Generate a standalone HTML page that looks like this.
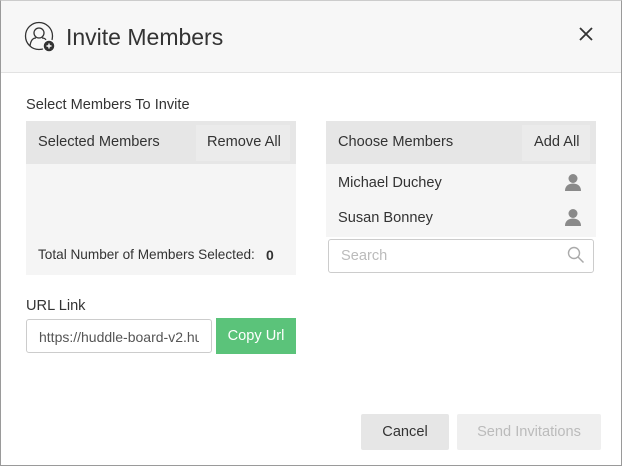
<!DOCTYPE html>
<html><head><style>
*{box-sizing:border-box;margin:0;padding:0}
body{width:622px;height:466px;background:#fff;font-family:"Liberation Sans",sans-serif;color:#333;position:relative;overflow:hidden}
.frame{position:absolute;left:0;top:0;width:622px;height:466px;border:1px solid #9a9a9a;border-top-color:#ccc}
.hdr{position:absolute;left:1px;top:1px;width:620px;height:72px;background:#f7f7f7;border-bottom:1px solid #e2e2e2}
.abs{position:absolute;white-space:nowrap}
.t13{font-size:14.6px;color:#333}
</style></head><body>
<div class="frame"></div>
<div class="hdr"></div>
<svg class="abs" style="left:24px;top:21px" width="34" height="34" viewBox="0 0 34 34">
<circle cx="15" cy="15" r="13.5" fill="none" stroke="#333" stroke-width="1.3"/>
<circle cx="15" cy="12" r="5" fill="none" stroke="#333" stroke-width="1.3"/>
<path d="M6 25 Q7 17 12 17 M18 17 Q21 17 22 19" fill="none" stroke="#333" stroke-width="1.3"/>
<circle cx="25" cy="25" r="6" fill="#333" stroke="#f7f7f7" stroke-width="1.5"/>
<path d="M22.5 25h5M25 22.5v5" stroke="#fff" stroke-width="1.4"/>
</svg>
<div class="abs" style="left:66px;top:24px;font-size:23px;color:#333">Invite Members</div>
<svg class="abs" style="left:579px;top:27px" width="14" height="14"><path d="M1 1L13 13M13 1L1 13" stroke="#333" stroke-width="1.8"/></svg>

<div class="abs t13" style="left:26px;top:97px">Select Members To Invite</div>

<div class="abs" style="left:26px;top:121px;width:270px;height:154px;background:#f5f5f5"></div>
<div class="abs" style="left:26px;top:121px;width:270px;height:43px;background:#e6e6e6"></div>
<div class="abs" style="left:196px;top:125px;width:94px;height:36px;background:#ebebeb"></div>
<div class="abs t13" style="left:38px;top:134px">Selected Members</div>
<div class="abs t13" style="left:207px;top:134px">Remove All</div>
<div class="abs" style="left:38px;top:247px;font-size:13.6px">Total Number of Members Selected:</div>
<div class="abs" style="left:266px;top:247px;font-size:14px;font-weight:bold">0</div>

<div class="abs" style="left:326px;top:121px;width:270px;height:116px;background:#f5f5f5"></div>
<div class="abs" style="left:326px;top:121px;width:270px;height:43px;background:#e6e6e6"></div>
<div class="abs" style="left:522px;top:125px;width:68px;height:36px;background:#ebebeb"></div>
<div class="abs t13" style="left:338px;top:134px">Choose Members</div>
<div class="abs t13" style="left:534px;top:134px">Add All</div>
<div class="abs t13" style="left:338px;top:175px">Michael Duchey</div>
<div class="abs t13" style="left:338px;top:210px">Susan Bonney</div>
<svg class="abs" style="left:564px;top:173px" width="18" height="18" viewBox="0 0 18 18"><circle cx="9" cy="5.5" r="4.5" fill="#8a8a8a"/><path d="M1 18Q1 11 9 10.5Q17 11 17 18Z" fill="#8a8a8a"/></svg>
<svg class="abs" style="left:564px;top:208px" width="18" height="18" viewBox="0 0 18 18"><circle cx="9" cy="5.5" r="4.5" fill="#8a8a8a"/><path d="M1 18Q1 11 9 10.5Q17 11 17 18Z" fill="#8a8a8a"/></svg>
<div class="abs" style="left:328px;top:239px;width:266px;height:34px;border:1px solid #ccc;border-radius:3px;background:#fff"></div>
<div class="abs" style="left:341px;top:248px;font-size:14.6px;color:#bbb">Search</div>
<svg class="abs" style="left:567px;top:246px" width="18" height="18"><circle cx="7" cy="7" r="5.5" fill="none" stroke="#aaa" stroke-width="1.4"/><path d="M11 11L16.5 16.5" stroke="#aaa" stroke-width="1.5"/></svg>

<div class="abs t13" style="left:26px;top:298px">URL Link</div>
<div class="abs" style="left:26px;top:319px;width:186px;height:34px;border:1px solid #ccc;border-radius:3px;background:#fff;overflow:hidden"><div style="position:absolute;left:12px;top:9px;font-size:14px;color:#555;white-space:nowrap;width:160px;overflow:hidden">https://huddle-board-v2.hu</div></div>
<div class="abs" style="left:216px;top:318px;width:80px;height:36px;background:#5bc37a;color:#fff;font-size:14.6px;text-align:center;line-height:36px">Copy Url</div>

<div class="abs" style="left:361px;top:414px;width:88px;height:36px;background:#e6e6e6;border-radius:2px;font-size:14.6px;text-align:center;line-height:36px;color:#333">Cancel</div>
<div class="abs" style="left:457px;top:414px;width:144px;height:36px;background:#efefef;border-radius:2px;font-size:14.6px;text-align:center;line-height:36px;color:#bbb">Send Invitations</div>
</body></html>
